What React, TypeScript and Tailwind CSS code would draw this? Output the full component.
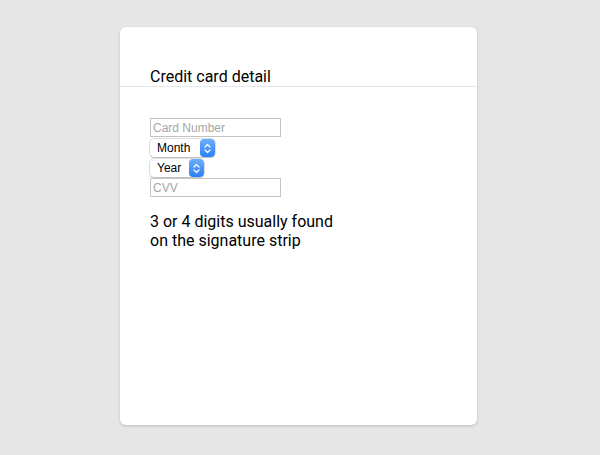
import { useState } from "react"

const SelectBox = ({ label, width }: { label: string; width: string }) => (
    <div
        className={`flex items-center h-[18px] ${width} rounded-[4px] bg-white shadow-[0_0_0_0.5px_rgba(0,0,0,0.25),0_1px_1px_rgba(0,0,0,0.15)] overflow-hidden`}
    >
        <span className="flex-1 pl-[7px] text-[12px] leading-[18px] text-black font-['Liberation_Sans',sans-serif]">{label}</span>
        <div className="flex items-center justify-center w-[15px] h-full rounded-[4px] bg-gradient-to-b from-[#6aaefc] to-[#2a7ff6]">
            <svg width="7" height="11" viewBox="0 0 7 11" fill="none">
                <path d="M1 4 L3.5 1.5 L6 4" stroke="white" strokeWidth="1.2" strokeLinecap="round" strokeLinejoin="round" />
                <path d="M1 7 L3.5 9.5 L6 7" stroke="white" strokeWidth="1.2" strokeLinecap="round" strokeLinejoin="round" />
            </svg>
        </div>
    </div>
)

export default function App() {
    const [cardNumber, setCardNumber] = useState("")
    const [cvv, setCvv] = useState("")

    return (
        <div className="min-h-[455px] w-full bg-[#e6e6e6] pt-[27px] font-['Roboto',sans-serif]">
            <div className="ml-[120px] w-[357px] h-[398px] bg-white rounded-[6px] shadow-[0_1px_3px_rgba(0,0,0,0.18)]">
                <div className="pt-[41px] px-[30px] border-b border-[#e3e8ec]">
                    <h2 className="text-[16px] leading-[18px] text-black">Credit card detail</h2>
                </div>

                <div className="px-[30px] pt-[31px] flex flex-col items-start">
                    <input
                        value={cardNumber}
                        onChange={(e) => setCardNumber(e.target.value)}
                        placeholder="Card Number"
                        className="w-[131px] h-[19px] border border-[#c4c4c4] px-[2px] text-[12px] leading-[17px] text-black placeholder:text-[#a6a6a6] outline-none font-['Liberation_Sans',sans-serif]"
                    />
                    <div className="mt-[2px]">
                        <SelectBox label="Month" width="w-[65px]" />
                    </div>
                    <div className="mt-[2px]">
                        <SelectBox label="Year" width="w-[54px]" />
                    </div>
                    <input
                        value={cvv}
                        onChange={(e) => setCvv(e.target.value)}
                        placeholder="CVV"
                        className="mt-[1px] w-[131px] h-[19px] border border-[#c4c4c4] px-[2px] text-[12px] leading-[17px] text-black placeholder:text-[#a6a6a6] outline-none font-['Liberation_Sans',sans-serif]"
                    />
                    <p className="mt-[15px] text-[16px] leading-[19px] text-black">
                        3 or 4 digits usually found
                        <br />
                        on the signature strip
                    </p>
                </div>
            </div>
        </div>
    )
}
